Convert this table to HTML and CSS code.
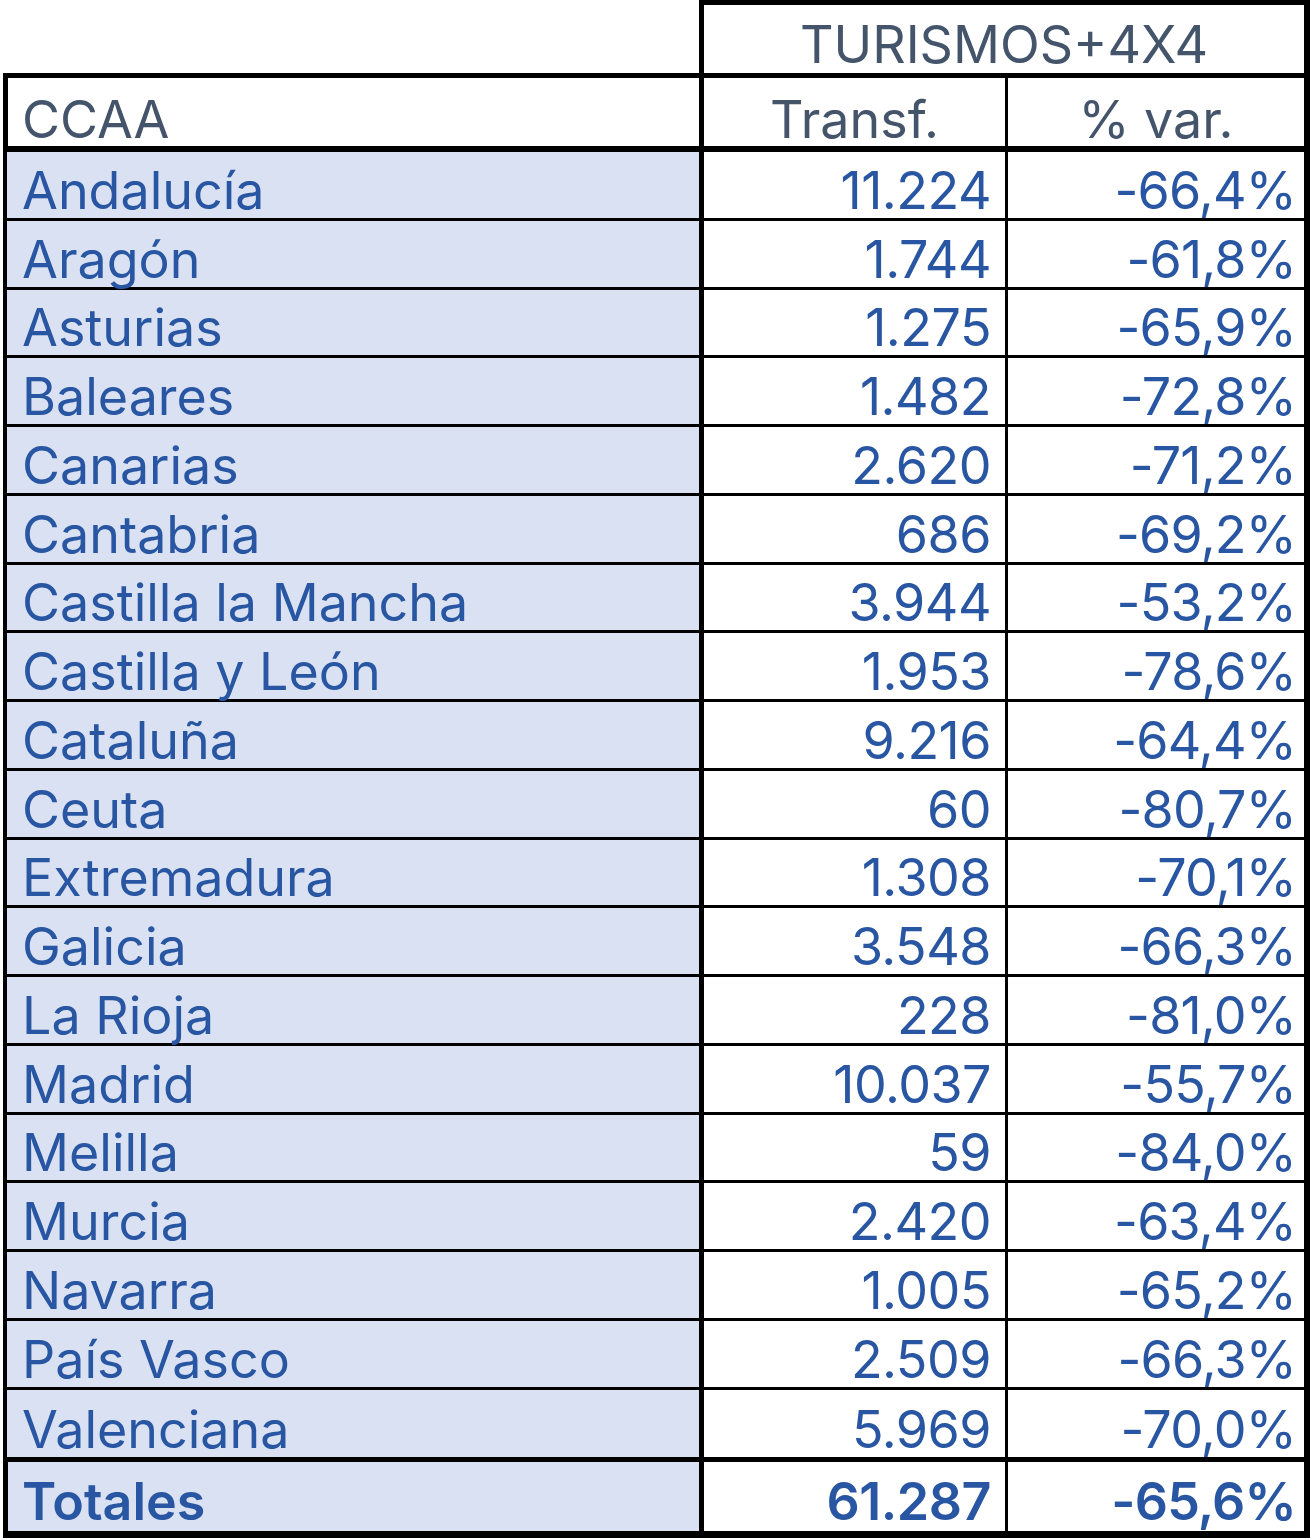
FILE: index.html
```html
<!DOCTYPE html>
<html lang="es">
<head>
<meta charset="utf-8">
<title>Turismos+4x4 por CCAA</title>
<link rel="stylesheet" href="styles.css">
</head>
<body>
<table class="sheet">
  <colgroup>
    <col class="c-name">
    <col class="c-num">
    <col class="c-pct">
  </colgroup>
  <thead>
    <tr class="h1">
      <th class="blank"></th>
      <th class="group" colspan="2">TURISMOS+4X4</th>
    </tr>
    <tr class="h2">
      <th class="name">CCAA</th>
      <th class="num">Transf.</th>
      <th class="pct">% var.</th>
    </tr>
  </thead>
  <tbody>
    <tr><td class="name">Andalucía</td><td class="num">11.224</td><td class="pct">-66,4%</td></tr>
    <tr><td class="name">Aragón</td><td class="num">1.744</td><td class="pct">-61,8%</td></tr>
    <tr><td class="name">Asturias</td><td class="num">1.275</td><td class="pct">-65,9%</td></tr>
    <tr><td class="name">Baleares</td><td class="num">1.482</td><td class="pct">-72,8%</td></tr>
    <tr><td class="name">Canarias</td><td class="num">2.620</td><td class="pct">-71,2%</td></tr>
    <tr><td class="name">Cantabria</td><td class="num">686</td><td class="pct">-69,2%</td></tr>
    <tr><td class="name">Castilla la Mancha</td><td class="num">3.944</td><td class="pct">-53,2%</td></tr>
    <tr><td class="name">Castilla y León</td><td class="num">1.953</td><td class="pct">-78,6%</td></tr>
    <tr><td class="name">Cataluña</td><td class="num">9.216</td><td class="pct">-64,4%</td></tr>
    <tr><td class="name">Ceuta</td><td class="num">60</td><td class="pct">-80,7%</td></tr>
    <tr><td class="name">Extremadura</td><td class="num">1.308</td><td class="pct">-70,1%</td></tr>
    <tr><td class="name">Galicia</td><td class="num">3.548</td><td class="pct">-66,3%</td></tr>
    <tr><td class="name">La Rioja</td><td class="num">228</td><td class="pct">-81,0%</td></tr>
    <tr><td class="name">Madrid</td><td class="num">10.037</td><td class="pct">-55,7%</td></tr>
    <tr><td class="name">Melilla</td><td class="num">59</td><td class="pct">-84,0%</td></tr>
    <tr><td class="name">Murcia</td><td class="num">2.420</td><td class="pct">-63,4%</td></tr>
    <tr><td class="name">Navarra</td><td class="num">1.005</td><td class="pct">-65,2%</td></tr>
    <tr><td class="name">País Vasco</td><td class="num">2.509</td><td class="pct">-66,3%</td></tr>
    <tr class="last"><td class="name">Valenciana</td><td class="num">5.969</td><td class="pct">-70,0%</td></tr>
  </tbody>
  <tfoot>
    <tr class="total"><td class="name">Totales</td><td class="num">61.287</td><td class="pct">-65,6%</td></tr>
  </tfoot>
</table>
</body>
</html>
```

FILE: styles.css
```css
*, *::before, *::after { box-sizing: border-box; }

html, body {
  margin: 0;
  padding: 0;
  background: #ffffff;
}

.sheet {
  margin-left: 3px;
  width: 1307px;
  table-layout: fixed;
  border-collapse: separate;
  border-spacing: 0;
  font-family: Inter, "Liberation Sans", sans-serif;
  font-size: 52px;
  line-height: 52px;
  font-weight: 400;
  color: #2956a2;
  font-variant-numeric: proportional-nums;
}

.c-name { width: 696px; }
.c-num { width: 306px; }
.c-pct { width: 305px; }

th, td {
  padding: 0;
  vertical-align: bottom;
  white-space: nowrap;
  font-weight: inherit;
}

/* header row 1 */
.h1 th { height: 78px; padding-bottom: 2px; color: #44546a; }
.h1 .blank { border-bottom: 5px solid #000; }
.h1 .group {
  text-align: center;
  border: 5px solid #000;
  border-right-width: 6px;
}

/* header row 2 */
.h2 th { height: 74px; padding-bottom: 0; color: #44546a; border-bottom: 6px solid #000; }
.h2 .name { text-align: left; border-left: 5px solid #000; padding-left: 14px; }
.h2 .num { text-align: center; border-left: 5px solid #000; }
.h2 .pct { text-align: center; border-left: 3px solid #000; border-right: 6px solid #000; }

/* body rows */
tbody td { height: 68.76px; border-bottom: 3px solid #000; padding-bottom: 1px; }
tbody tr.last td { height: 67.6px; border-bottom: 0; }

td.name { background: #d9e1f2; border-left: 4px solid #000; padding-left: 15px; }
td.num { text-align: right; border-left: 5px solid #000; padding-right: 14px; letter-spacing: -0.5px; }
td.pct { text-align: right; border-left: 3px solid #000; border-right: 6px solid #000; padding-right: 8px; letter-spacing: -0.8px; }

/* totals */
.total td {
  height: 81px;
  border-top: 5px solid #000;
  border-bottom: 7px solid #000;
  padding-bottom: 3px;
  font-weight: 600;
}
.total td.name { border-left-width: 5px; padding-left: 14px; }
```
